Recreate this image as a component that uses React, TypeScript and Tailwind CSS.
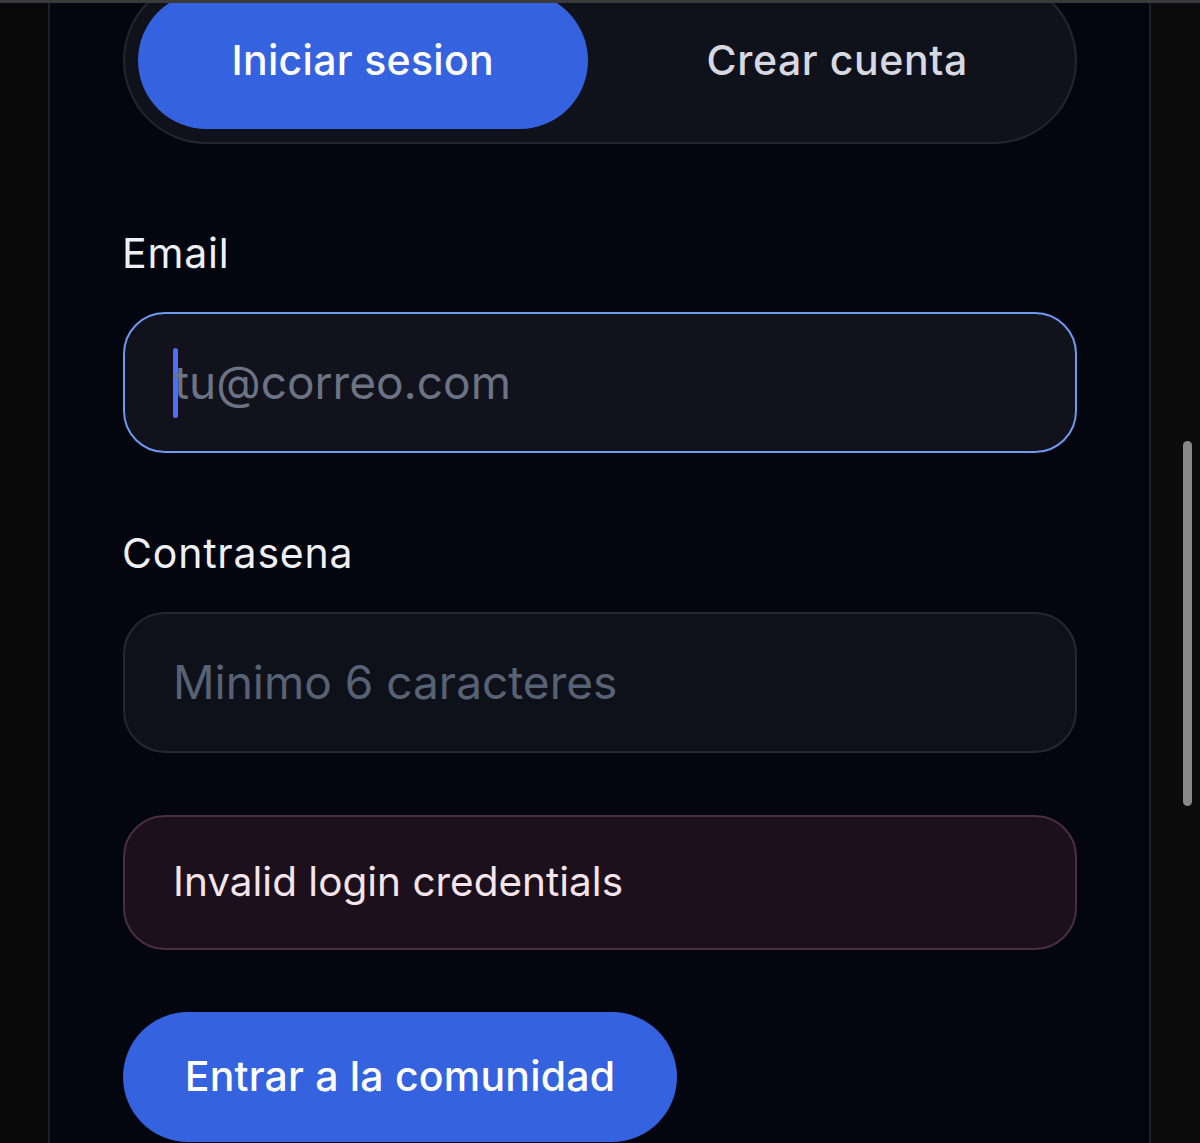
import React from "react";

export default function App() {
  return (
    <div className="h-[1143px] w-[1200px] overflow-hidden bg-[#0a0a0a] flex flex-col" style={{ fontFamily: "Inter, 'Noto Sans', sans-serif" }}>
      <div className="h-[3px] w-full bg-[#3a3a3c] shrink-0 relative z-10" />
      <div className="flex flex-row flex-1 min-h-0">
        <div className="w-[48px] shrink-0 bg-[#090909]" />
        <div className="flex-1 min-w-0 bg-[#03050f] border-x-2 border-[#1e2028] overflow-hidden pl-[73px] pr-[72px]">
          <div className="mt-[-26px] h-[167px] rounded-full border-2 border-[#23262f] bg-[#10121b] p-[13px] flex flex-row gap-[25px]">
            <div className="flex-1 rounded-full bg-[#3563e0] flex items-center justify-center text-white text-[41px] font-medium tracking-[0.3px]">
              Iniciar sesion
            </div>
            <div className="flex-1 rounded-full flex items-center justify-center text-[#d6d9e2] text-[41px] font-medium tracking-[0.6px]">
              Crear cuenta
            </div>
          </div>

          <div className="mt-[89px] ml-[-1px] text-[41px] tracking-[0.8px] text-[#eef0f4] leading-none">Email</div>
          <div className="mt-[38px] h-[141px] rounded-[42px] border-[2.5px] border-[#6e9bf0] bg-[#11121b] flex items-center pl-[48px]">
            <div className="w-[5px] h-[70px] rounded-full bg-[#4f6ef7]" />
            <span className="text-[46px] text-[#6b7384] ml-[-4px]">tu@correo.com</span>
          </div>

          <div className="mt-[80px] ml-[-1px] text-[41px] tracking-[0.8px] text-[#eef0f4] leading-none">Contrasena</div>
          <div className="mt-[38px] h-[141px] rounded-[42px] border-2 border-[#252831] bg-[#0f111a] flex items-center pl-[48px]">
            <span className="text-[46px] text-[#586275]">Minimo 6 caracteres</span>
          </div>

          <div className="mt-[62px] h-[135px] rounded-[42px] border-2 border-[#4b2f3e] bg-[#1b101c] flex items-center pl-[48px]">
            <span className="text-[40.5px] text-[#f5e4ea]">Invalid login credentials</span>
          </div>

          <div className="mt-[62px] h-[130px] w-[554px] rounded-full bg-[#3563e0] flex items-center justify-center text-white text-[41px] font-medium tracking-[0.2px]">
            Entrar a la comunidad
          </div>
        </div>
        <div className="w-[49px] shrink-0 bg-[#0b0b0b] pl-[32px] pt-[438px]">
          <div className="w-[9px] h-[365px] rounded-full bg-[#888888]" />
        </div>
      </div>
    </div>
  );
}
